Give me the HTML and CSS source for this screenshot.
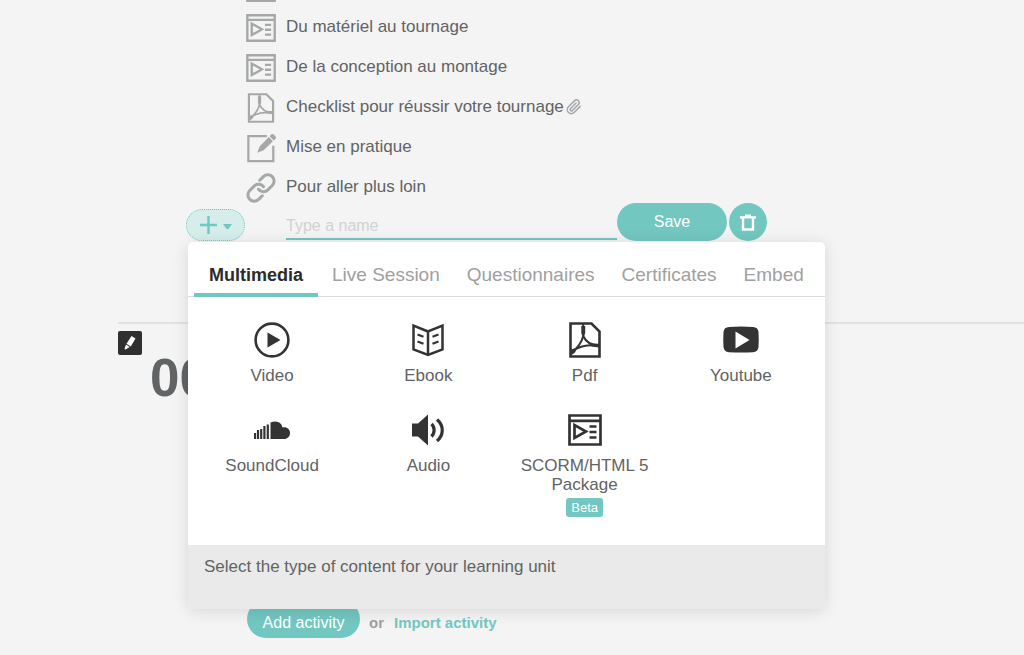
FILE: index.html
```html
<!DOCTYPE html>
<html lang="fr">
<head>
<meta charset="utf-8">
<meta name="viewport" content="width=device-width, initial-scale=1">
<title>Activities</title>
<link rel="stylesheet" href="styles.css">
</head>
<body>
<svg class="sprite" aria-hidden="true">
  <symbol id="scorm" viewBox="0 0 34 32">
    <path d="M1.500 1.500h31v29h-31zM1.500 6.800h31M6.500 11v13l11.500-6.500zM21.500 12.500h7M21.500 18h7M21.500 23.500h7" fill="none" stroke="currentColor" stroke-width="2.700"/>
  </symbol>
  <symbol id="pdf" viewBox="0 0 32 36">
    <path d="M1.500 1.500h21l8 8v25h-29z" fill="none" stroke="currentColor" stroke-width="2.600"/>
    <path d="M14.200 2v12C13 19 9.500 25 3.500 30M14.200 14C16.500 19 21 23 29 23.500M4 28.500C11 24 19 22.500 29 23.500" fill="none" stroke="currentColor" stroke-width="2"/>
    <path d="M12.300 4h3.900v7l-1 3h-2l-.9-3zM2 27.500l6.500-2-2.500 5-4 3zM22.500 21.500l7.500.2v3.800l-7.500-1z" fill="currentColor"/>
  </symbol>
  <symbol id="edit" viewBox="0 0 28 28">
    <path d="M19.500 3H2.200v23.200h23.300V12" fill="none" stroke="currentColor" stroke-width="2.100"/>
    <path d="M10.500 18.500l2.200-6L21.300 3.800l3.800 3.800-8.600 8.600zM22 3l1.800-1.800c1.200-1.200 5.200 2.600 4 3.900L25.900 6.900z" fill="currentColor"/>
  </symbol>
  <symbol id="chain" viewBox="0 0 24 24">
    <path d="M10 13a5 5 0 0 0 7.500.5l3.500-3.500a5 5 0 0 0-7.100-7.100l-2.900 2.900M14 11a5 5 0 0 0-7.500-.5L3 14a5 5 0 0 0 7.100 7.100l2.900-2.900" fill="none" stroke="currentColor" stroke-width="2.400" stroke-linecap="round"/>
  </symbol>
  <symbol id="clip" viewBox="0 0 24 24">
    <path d="M21.400 11l-9.200 9.200a6 6 0 0 1-8.500-8.500l9.200-9.200a4 4 0 0 1 5.700 5.700l-9.200 9.200a2 2 0 0 1-2.800-2.800l8.500-8.500" fill="none" stroke="currentColor" stroke-width="2.300" stroke-linecap="round"/>
  </symbol>
</svg>

<main class="page">
  <ul class="units">
    <li class="unit"><svg class="unit-icon"><use href="#scorm"/></svg></li>
    <li class="unit"><svg class="unit-icon"><use href="#scorm"/></svg><span>Du matériel au tournage</span></li>
    <li class="unit"><svg class="unit-icon"><use href="#scorm"/></svg><span>De la conception au montage</span></li>
    <li class="unit"><svg class="unit-icon"><use href="#pdf"/></svg><span>Checklist pour réussir votre tournage</span><svg class="clip"><use href="#clip"/></svg></li>
    <li class="unit"><svg class="unit-icon"><use href="#edit"/></svg><span>Mise en pratique</span></li>
    <li class="unit"><svg class="unit-icon"><use href="#chain"/></svg><span>Pour aller plus loin</span></li>
  </ul>

  <form class="composer">
    <button class="type-button" type="button" aria-label="Choose type">
      <svg width="32" height="18" viewBox="0 0 32 18"><path d="M8.500 0v18M0 9h17" stroke="currentColor" stroke-width="2.400"/><path d="M23 8h9l-3.500 5h-2z" fill="currentColor"/></svg>
    </button>
    <input class="name-input" type="text" placeholder="Type a name" aria-label="Name">
    <button class="pill save" type="button">Save</button>
    <button class="trash" type="button" aria-label="Delete">
      <svg width="16" height="17" viewBox="0 0 16 17"><path d="M3 4v11.500h10V4" fill="none" stroke="currentColor" stroke-width="2.400"/><path d="M0 2.200h5V.500h6v1.700h5v2.400H0z" fill="currentColor"/></svg>
    </button>

    <div class="picker">
      <div class="tabs" role="tablist">
        <button class="tab active" type="button" role="tab" aria-selected="true">Multimedia</button>
        <button class="tab" type="button" role="tab">Live Session</button>
        <button class="tab" type="button" role="tab">Questionnaires</button>
        <button class="tab" type="button" role="tab">Certificates</button>
        <button class="tab" type="button" role="tab">Embed</button>
      </div>
      <div class="types">
        <button class="type" type="button">
          <svg width="36" height="36" viewBox="0 0 36 36"><circle cx="18" cy="18" r="16.400" fill="none" stroke="currentColor" stroke-width="2.600"/><path d="M13.500 10.500l13 7.500-13 7.500z" fill="currentColor"/></svg>
          <span>Video</span>
        </button>
        <button class="type" type="button">
          <svg width="32" height="36" viewBox="0 0 32 36"><path d="M16 9.500L1.500 3.500v24L16 33l14.500-5.500v-24zM16 9.500V33" fill="none" stroke="currentColor" stroke-width="2.500"/><path d="M5.500 12.500l6 2.300M5.500 19.500l6 2.300M26.500 12.500l-6 2.300M26.500 19.500l-6 2.300" stroke="currentColor" stroke-width="2.200"/></svg>
          <span>Ebook</span>
        </button>
        <button class="type" type="button">
          <svg width="32" height="36"><use href="#pdf"/></svg>
          <span>Pdf</span>
        </button>
        <button class="type" type="button">
          <svg width="36" height="36" viewBox="0 0 36 36"><path fill-rule="evenodd" d="M6 5Q18 4.200 30 5Q35 5.200 35.500 10Q36 18 35.500 25Q35 30 30 30.200Q18 31 6 30.200Q1 30 .5 25Q0 18 .5 10Q1 5.200 6 5zM12.500 9.500v17L26.500 18z" fill="currentColor"/></svg>
          <span>Youtube</span>
        </button>
        <button class="type" type="button">
          <svg width="36" height="36" viewBox="0 0 36 36"><path d="M16.500 10.500C23 7.500 28 11 28.500 15.500C33 14.500 36 17.500 36 21C36 24.500 33.500 27 30 27H16.500z" fill="currentColor"/><path d="M1 21v6M4 18v9M7.200 17v10M10.400 14v13M13.800 12.500v14.500" stroke="currentColor" stroke-width="2.200"/></svg>
          <span>SoundCloud</span>
        </button>
        <button class="type" type="button">
          <svg width="32" height="36" viewBox="0 0 32 36"><path d="M0 11.500h6L16 2.500v31L6 24.500H0z" fill="currentColor"/><path d="M19.500 12c3.500 3 3.500 9 0 12.500M25 7.500c7 6 7 15.500 0 21.500" fill="none" stroke="currentColor" stroke-width="3.200"/></svg>
          <span>Audio</span>
        </button>
        <button class="type" type="button">
          <svg width="34" height="36"><use href="#scorm"/></svg>
          <span>SCORM/HTML 5 Package</span>
          <span class="beta">Beta</span>
        </button>
      </div>
      <p class="hint">Select the type of content for your learning unit</p>
    </div>
  </form>

  <section class="chapter">
    <button class="edit-badge" type="button" aria-label="Edit">
      <svg width="12" height="14" viewBox="0 0 12 14"><path d="M7.500 0l4 2.500-4.700 8-4.300-2.700zM2 8.600l3.700 2.300L1.500 13.500.500 13z" fill="currentColor"/></svg>
    </button>
    <h2 class="chapter-number">00</h2>
  </section>

  <div class="actions">
    <button class="pill add" type="button">Add activity</button>
    <span class="or">or</span>
    <a class="import" href="#">Import activity</a>
  </div>
</main>
</body>
</html>
```
FILE: styles.css
```css
* {
  box-sizing: border-box;
}

body {
  margin: 0;
  overflow: hidden;
  background: #f4f4f4;
  color: #616364;
  font-family: "Liberation Sans", Arial, sans-serif;
  font-size: 17px;
}

button,
input {
  margin: 0;
  padding: 0;
  border: 0;
  background: none;
  color: inherit;
  font: inherit;
}

svg {
  flex: none;
}

.sprite {
  position: absolute;
  width: 0;
  height: 0;
}

.page {
  display: flow-root;
}

/* Learning units */
.units {
  margin: -33px 0 0 246px;
  padding: 0;
  list-style: none;
}

.unit {
  display: flex;
  align-items: center;
  height: 40px;
}

.unit-icon {
  width: 30px;
  height: 30px;
  margin: 2px 10px 0 0;
  color: #a6a8a8;
}

.clip {
  width: 16px;
  height: 16px;
  margin-left: 2px;
  color: #a6a8a8;
}

/* New unit form */
.composer {
  position: relative;
  display: flex;
  align-items: flex-end;
  height: 38px;
  margin: -4px 0 0 186px;
}

.type-button {
  display: flex;
  align-items: center;
  justify-content: center;
  width: 59px;
  height: 32px;
  margin-right: 41px;
  border: 1px dotted #72c7c0;
  border-radius: 16px;
  background: #d5eeeb;
  color: #72c7c0;
}

.name-input {
  width: 331px;
  height: 29px;
  margin-bottom: 1px;
  padding-top: 2px;
  border-bottom: 2px solid #72c7c0;
  border-radius: 0;
  font-size: 16px;
}

.name-input::placeholder {
  color: #d0d2d2;
}

.pill {
  height: 38px;
  border-radius: 19px;
  background: #72c7c0;
  color: #fff;
  font-size: 16px;
}

.save {
  width: 110px;
}

.trash {
  display: flex;
  align-items: center;
  justify-content: center;
  width: 38px;
  height: 38px;
  margin-left: 2px;
  border-radius: 50%;
  background: #72c7c0;
  color: #fff;
}

/* Content type picker */
.picker {
  position: absolute;
  top: 39px;
  left: 2px;
  width: 637px;
  overflow: hidden;
  border-radius: 5px;
  background: #fff;
  box-shadow: 0 2px 16px rgba(0, 0, 0, 0.12);
}

.tabs {
  display: flex;
  gap: 1px;
  height: 55px;
  padding: 0 6px;
  border-bottom: 1px solid #dcdcdc;
}

.tab {
  height: 55px;
  padding: 14px 13px 0;
  border-bottom: 4px solid transparent;
  color: #9fa0a0;
  font-size: 19px;
}

.tab.active {
  padding: 15px 15px 0;
  border-color: #72c7c0;
  color: #2b2b2b;
  font-size: 18px;
  font-weight: bold;
}

.types {
  display: grid;
  grid-template-columns: repeat(4, 1fr);
  grid-auto-rows: minmax(90px, auto);
  align-items: start;
  min-height: 248px;
  padding: 25px 6px 0;
  align-content: start;
}

.type {
  display: flex;
  flex-direction: column;
  align-items: center;
  padding: 0 12px;
  color: #616364;
  line-height: 19px;
}

.type svg {
  margin-bottom: 8px;
  color: #333;
}

.beta {
  margin-top: 4px;
  padding: 0 5px;
  border-radius: 3px;
  background: #72c7c0;
  color: #fff;
  font-size: 13px;
}

.hint {
  min-height: 64px;
  margin: 0;
  padding: 12px 16px;
  background: #eaeaea;
  line-height: 20px;
}

/* Chapter */
.chapter {
  display: flex;
  align-items: flex-start;
  gap: 8px;
  min-height: 278px;
  margin: 81px 0 0 118px;
  padding-top: 7px;
  border-top: 2px solid #e2e2e2;
}

.edit-badge {
  display: flex;
  align-items: center;
  justify-content: center;
  width: 24px;
  height: 24px;
  border-radius: 2px;
  background: #2f2f2f;
  color: #fff;
}

.chapter-number {
  margin: 17px 0 0;
  font-size: 53px;
  line-height: 60px;
}

.actions {
  display: flex;
  align-items: center;
  margin-left: 247px;
  padding-bottom: 16px;
}

.add {
  width: 113px;
  padding-top: 7px;
}

.or {
  margin: 6px 10px 0 9px;
  color: #9fa0a0;
  font-size: 15px;
  font-weight: bold;
}

.import {
  margin-top: 6px;
  color: #72c7c0;
  font-size: 15px;
  font-weight: bold;
  text-decoration: none;
}
```
